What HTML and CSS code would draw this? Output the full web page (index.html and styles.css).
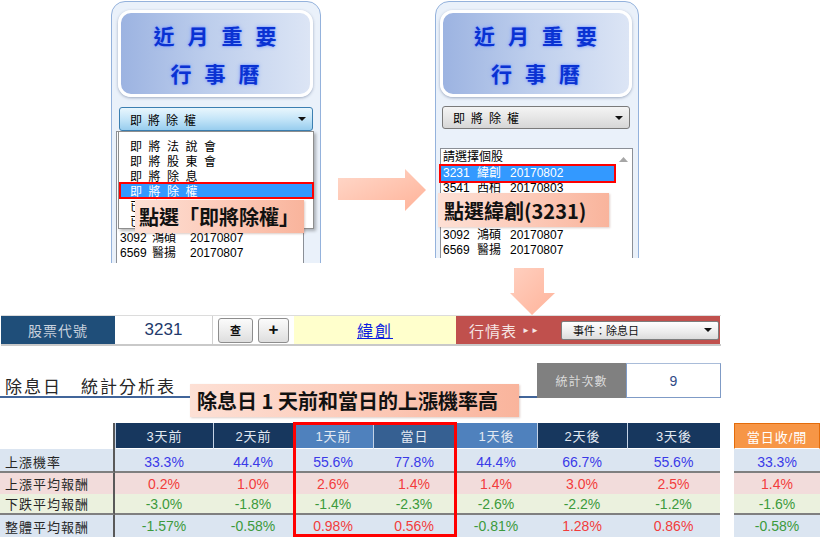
FILE: index.html
```html
<!DOCTYPE html>
<html lang="zh-Hant">
<head>
<meta charset="utf-8">
<title>除息日 統計分析表</title>
<link rel="stylesheet" href="styles.css">
</head>
<body>
<div class="page">
  <section class="top">
    <div class="clip clip-l">
      <div class="panel panel-l">
        <div class="cal-title">
          <div class="cal-line">近月重要</div>
          <div class="cal-line">行事曆</div>
        </div>
        <div class="combo combo-hot combo-l"><span class="combo-text">即將除權</span><span class="caret"></span></div>
        <div class="listbox lb-l">
          <div class="lb-row covered"><span class="c-code">請選擇個股</span></div>
          <div class="lb-row covered"><span class="c-code">2330</span><span class="c-name">台積</span><span>20170803</span></div>
          <div class="lb-row covered"><span class="c-code">1101</span><span class="c-name">台泥</span><span>20170804</span></div>
          <div class="lb-row covered"><span class="c-code">2412</span><span class="c-name">中華</span><span>20170804</span></div>
          <div class="lb-row covered"><span class="c-code">3008</span><span class="c-name">大立</span><span>20170805</span></div>
          <div class="lb-row covered"><span class="c-code">2317</span><span class="c-name">鴻海</span><span>20170806</span></div>
          <div class="lb-row"><span class="c-code">3092</span><span class="c-name">鴻碩</span><span>20170807</span></div>
          <div class="lb-row"><span class="c-code">6569</span><span class="c-name">醫揚</span><span>20170807</span></div>
        </div>
        <ul class="popup">
          <li>即將法說會</li>
          <li>即將股東會</li>
          <li>即將除息</li>
          <li class="sel">即將除權</li>
          <li>已除息個股</li>
          <li>已除權個股</li>
        </ul>
        <div class="callout co-l">點選「即將除權」</div>
      </div>
    </div>

    <div class="arrow-r">
      <svg width="90" height="44" viewBox="0 0 90 44">
        <defs>
          <linearGradient id="ga" x1="0" y1="0" x2="1" y2="1">
            <stop offset="0" stop-color="#ffd9cb"/>
            <stop offset="1" stop-color="#ffb298"/>
          </linearGradient>
        </defs>
        <polygon points="0,10 67,10 67,1 88,22 67,43 67,32 0,32" fill="url(#ga)"/>
      </svg>
    </div>

    <div class="clip clip-r">
      <div class="panel panel-r">
        <div class="cal-title cal-title-r">
          <div class="cal-line">近月重要</div>
          <div class="cal-line">行事曆</div>
        </div>
        <div class="combo combo-r"><span class="combo-text">即將除權</span><span class="caret"></span></div>
        <div class="listbox lb-r">
          <div class="lb-rows">
            <div class="lb-row">請選擇個股</div>
            <div class="lb-row sel"><span class="r-code">3231</span><span class="r-name">緯創</span><span>20170802</span></div>
            <div class="lb-row"><span class="r-code">3541</span><span class="r-name">西柏</span><span>20170803</span></div>
            <div class="lb-row covered"><span class="r-code">3596</span><span class="r-name">智易</span><span>20170804</span></div>
            <div class="lb-row covered"><span class="r-code">6176</span><span class="r-name">瑞儀</span><span>20170804</span></div>
            <div class="lb-row"><span class="r-code">3092</span><span class="r-name">鴻碩</span><span>20170807</span></div>
            <div class="lb-row"><span class="r-code">6569</span><span class="r-name">醫揚</span><span>20170807</span></div>
          </div>
          <div class="scroll">
            <svg width="9" height="6" viewBox="0 0 9 6"><polygon points="0,5 4.5,0 9,5" fill="#a6a6a6"/></svg>
          </div>
        </div>
        <div class="callout co-r">點選緯創(3231)</div>
      </div>
    </div>
  </section>

  <div class="gap-down">
    <svg class="arrow-d" width="46" height="47" viewBox="0 0 46 47">
      <defs>
        <linearGradient id="gd" x1="0" y1="0" x2="1" y2="1">
          <stop offset="0" stop-color="#ffd0c0"/>
          <stop offset="1" stop-color="#ffb39a"/>
        </linearGradient>
      </defs>
      <polygon points="4,0 34,0 34,25 45,25 22,47 0,25 4,25" fill="url(#gd)"/>
    </svg>
  </div>

  <div class="bar">
    <div class="b-label">股票代號</div>
    <div class="b-code">3231</div>
    <div class="b-btns">
      <span class="btn btn-q">查</span>
      <span class="btn btn-p">+</span>
    </div>
    <div class="b-name"><a href="#">緯創</a></div>
    <div class="b-red">
      <span class="b-quote">行情表</span>
      <span class="b-ff">►►</span>
      <div class="b-select"><span>事件：除息日</span><span class="caret"></span></div>
    </div>
  </div>

  <div class="stats-head">
    <div class="st-title">除息日　統計分析表</div>
    <div class="st-label">統計次數</div>
    <div class="st-value">9</div>
  </div>

  <div class="tbl-wrap">
    <div class="tbl">
      <div class="lab hd-empty"></div>
      <div class="hd navy">3天前</div>
      <div class="hd navy">2天前</div>
      <div class="hd mid">1天前</div>
      <div class="hd dark">當日</div>
      <div class="hd mid">1天後</div>
      <div class="hd navy">2天後</div>
      <div class="hd navy">3天後</div>
      <div class="gapc"></div>
      <div class="hd orange">當日收/開</div>

      <div class="lab r1 sep">上漲機率</div>
      <div class="v r1 sep blue">33.3%</div>
      <div class="v r1 sep blue">44.4%</div>
      <div class="v r1 sep blue">55.6%</div>
      <div class="v r1 sep blue">77.8%</div>
      <div class="v r1 sep blue">44.4%</div>
      <div class="v r1 sep blue">66.7%</div>
      <div class="v r1 sep blue">55.6%</div>
      <div class="gapc"></div>
      <div class="v r1 sep blue">33.3%</div>

      <div class="lab r2">上漲平均報酬</div>
      <div class="v r2 red">0.2%</div>
      <div class="v r2 red">1.0%</div>
      <div class="v r2 red">2.6%</div>
      <div class="v r2 red">1.4%</div>
      <div class="v r2 red">1.4%</div>
      <div class="v r2 red">3.0%</div>
      <div class="v r2 red">2.5%</div>
      <div class="gapc"></div>
      <div class="v r2 red">1.4%</div>

      <div class="lab r3 sep">下跌平均報酬</div>
      <div class="v r3 sep green">-3.0%</div>
      <div class="v r3 sep green">-1.8%</div>
      <div class="v r3 sep green">-1.4%</div>
      <div class="v r3 sep green">-2.3%</div>
      <div class="v r3 sep green">-2.6%</div>
      <div class="v r3 sep green">-2.2%</div>
      <div class="v r3 sep green">-1.2%</div>
      <div class="gapc"></div>
      <div class="v r3 sep green">-1.6%</div>

      <div class="lab r4">整體平均報酬</div>
      <div class="v r4 green">-1.57%</div>
      <div class="v r4 green">-0.58%</div>
      <div class="v r4 red">0.98%</div>
      <div class="v r4 red">0.56%</div>
      <div class="v r4 green">-0.81%</div>
      <div class="v r4 red">1.28%</div>
      <div class="v r4 red">0.86%</div>
      <div class="gapc"></div>
      <div class="v r4 green">-0.58%</div>
    </div>
    <div class="hl-box"></div>
  </div>

  <div class="callout co-big">除息日 1 天前和當日的上漲機率高</div>
</div>
</body>
</html>
```

FILE: styles.css
```css
* { box-sizing: border-box; }
html, body { margin: 0; padding: 0; background: #ffffff; }
body {
  font-family: "Liberation Sans", "Noto Sans CJK TC", sans-serif;
  color: #000;
}
.page {
  position: relative;
  width: 820px;
  height: 537px;
  overflow: hidden;
  background: #fff;
}

/* ---------- top section ---------- */
.top {
  display: flex;
  align-items: flex-start;
  height: 263px;
  overflow: hidden;
}
.clip { overflow: hidden; }
.clip-l { margin-left: 111px; width: 210px; height: 263px; }
.clip-r { width: 205px; height: 258px; }

.panel {
  position: relative;
  margin-top: 1px;
  height: 300px;
  background: #eaf1fa;
  border: 1px solid #94b2dc;
  border-radius: 14px 14px 0 0;
}
.panel-l { width: 210px; padding: 8px 6px 0 6px; }
.panel-r { width: 204px; padding: 8px 4px 0 4px; }

.cal-title {
  width: 195px;
  height: 87px;
  border: 3px solid #ffffff;
  border-radius: 13px;
  background: linear-gradient(90deg, #9cb3e1 0%, #bccdec 45%, #dce5f5 100%);
  box-shadow: 0 1px 3px rgba(60, 80, 120, 0.45);
  display: flex;
  flex-direction: column;
  align-items: center;
  justify-content: center;
  gap: 14px;
  padding-left: 12px;
}
.cal-title-r { width: 192px; }
.cal-line {
  font-family: "Noto Sans CJK TC", sans-serif;
  font-weight: 700;
  font-size: 21px;
  line-height: 24px;
  letter-spacing: 13px;
  color: #0a32d2;
  text-shadow: 0 0 2px #6f93ff, 0 0 4px #8eaaff;
}

.combo {
  position: relative;
  display: flex;
  align-items: center;
  height: 24px;
  border-radius: 3px;
  font-family: "Noto Sans CJK TC", sans-serif;
  font-size: 12px;
}
.combo-text { letter-spacing: 6px; }
.combo-l {
  margin: 10px 0 0 1px;
  width: 194px;
  padding-left: 10px;
  border: 1px solid #3c7fb1;
  background: linear-gradient(180deg, #e9f6fd 0%, #c4e5f8 50%, #98cdee 100%);
}
.combo-r {
  margin: 9px 0 0 2px;
  width: 188px;
  height: 23px;
  padding-left: 10px;
  border: 1px solid #7a7a7a;
  background: linear-gradient(180deg, #f4f4f4 0%, #e6e6e6 50%, #d6d6d6 100%);
}
.caret {
  position: absolute;
  right: 6px;
  top: 50%;
  margin-top: -2px;
  width: 0;
  height: 0;
  border-left: 4px solid transparent;
  border-right: 4px solid transparent;
  border-top: 4px solid #111;
}

.listbox {
  background: #fff;
  border: 1px solid #8b8f96;
  font-size: 12px;
  line-height: 15px;
}
.lb-row { white-space: nowrap; display: flex; }
.lb-row.covered { visibility: hidden; }
.lb-l {
  margin-left: -2px;
  width: 188px;
  height: 140px;
  padding: 9px 0 0 3px;
  line-height: 15px;
}
.c-code { width: 32px; }
.c-name { width: 38px; }

.popup {
  position: absolute;
  left: 6px;
  top: 129px;
  width: 196px;
  height: 98px;
  margin: 0;
  padding: 6px 0 0 1px;
  list-style: none;
  background: #fff;
  border: 1px solid #8e8e8e;
  box-shadow: 2px 2px 3px rgba(0, 0, 0, 0.28);
  font-family: "Noto Sans CJK TC", sans-serif;
  font-size: 12px;
  line-height: 15px;
}
.popup li {
  padding-left: 10px;
  letter-spacing: 6.5px;
  white-space: nowrap;
}
.popup li.sel {
  background: #3399ff;
  color: #fff;
  outline: 2px solid #ff0000;
  outline-offset: -1px;
}

.lb-r {
  display: flex;
  margin-top: 19px;
  width: 193px;
  height: 140px;
  line-height: 15.5px;
}
.lb-rows { flex: 1; padding-top: 1px; }
.lb-r .lb-row { padding-left: 2px; }
.lb-r .lb-row.sel {
  background: #3399ff;
  color: #fff;
  outline: 2px solid #ff0000;
  outline-offset: 0;
}
.r-code { width: 34px; }
.r-name { width: 33px; }
.scroll {
  width: 18px;
  display: flex;
  justify-content: center;
  padding-top: 8px;
}

.callout {
  position: absolute;
  display: flex;
  align-items: center;
  font-family: "Noto Sans CJK TC", sans-serif;
  font-weight: 700;
  font-size: 20px;
  color: #111;
  background: linear-gradient(90deg, #fde0d5 0%, #fcc9b7 55%, #f9b49c 100%);
  box-shadow: 1px 1px 2px rgba(120, 60, 40, 0.25);
  white-space: nowrap;
}
.co-l { left: 23px; top: 198px; width: 169px; height: 33px; padding-left: 4px; }
.co-r { left: 2px; top: 191px; width: 171px; height: 34px; padding-left: 6px; }
.co-big { left: 190px; top: 384px; width: 329px; height: 33px; padding-left: 7px; letter-spacing: 0; }

.arrow-r { width: 114px; padding: 168px 0 0 17px; }
.arrow-r svg { display: block; }

/* ---------- down arrow ---------- */
.gap-down { height: 52px; padding: 5px 0 0 510px; }
.arrow-d { display: block; }

/* ---------- bar ---------- */
.bar {
  display: flex;
  width: 720px;
  height: 31px;
  margin-left: 1px;
  border-top: 1px solid #dcdcdc;
  border-bottom: 2px solid #c9c9c9;
  white-space: nowrap;
}
.bar > div { flex-shrink: 0; }
.b-label {
  width: 114px;
  background: #1f4e79;
  color: #c8d1dd;
  font-size: 14px;
  letter-spacing: 1px;
  display: flex;
  align-items: center;
  justify-content: center;
}
.b-code {
  width: 98px;
  background: #fff;
  color: #233a6b;
  font-size: 17px;
  display: flex;
  align-items: center;
  justify-content: center;
  border-right: 1px solid #d0d0d0;
}
.b-btns {
  width: 81px;
  display: flex;
  align-items: center;
  gap: 5px;
  padding-left: 5px;
}
.btn {
  display: flex;
  align-items: center;
  justify-content: center;
  height: 25px;
  border: 1px solid #8d8d8d;
  border-radius: 3px;
  background: linear-gradient(180deg, #fbfbfb 0%, #ececec 55%, #dedede 100%);
  color: #111;
  font-weight: 700;
}
.btn-q { width: 35px; font-size: 11px; }
.btn-p { width: 31px; font-size: 17px; }
.b-name {
  width: 162px;
  background: #ffffcc;
  display: flex;
  align-items: center;
  justify-content: center;
  font-size: 16px;
}
.b-name a { color: #0b1ee0; text-decoration: underline; letter-spacing: 2px; }
.b-red {
  width: 264px;
  background: #c0504d;
  display: flex;
  align-items: center;
  padding-left: 13px;
}
.b-quote { color: #f6e4e3; font-size: 15px; letter-spacing: 1px; flex-shrink: 0; }
.b-ff { color: #f6e4e3; font-size: 8px; letter-spacing: 1px; margin-left: 5px; flex-shrink: 0; }
.b-select {
  position: relative;
  margin-left: auto;
  margin-right: 1px;
  width: 158px;
  height: 19px;
  flex-shrink: 0;
  display: flex;
  align-items: center;
  padding-left: 11px;
  border: 1px solid #7d7d7d;
  border-radius: 2px;
  background: linear-gradient(180deg, #ffffff 0%, #ececec 60%, #dcdcdc 100%);
  font-size: 11px;
  color: #111;
}

/* ---------- stats head ---------- */
.stats-head {
  display: flex;
  width: 721px;
  height: 35px;
  margin-top: 17px;
}
.st-title {
  flex: 1;
  border-bottom: 2px solid #41659a;
  font-size: 17px;
  letter-spacing: 2px;
  color: #262626;
  padding: 10px 0 0 5px;
}
.st-label {
  width: 89px;
  background: #808080;
  color: #dadada;
  font-size: 12px;
  letter-spacing: 1px;
  display: flex;
  align-items: center;
  justify-content: center;
}
.st-value {
  width: 95px;
  border: 1px solid #7f9bc6;
  border-top-color: #a9bcd9;
  color: #2f4a86;
  font-size: 14px;
  display: flex;
  align-items: center;
  justify-content: center;
}

/* ---------- table ---------- */
.tbl-wrap { position: relative; margin-top: 25px; }
.tbl {
  display: grid;
  grid-template-columns: 115px 98px 80px 80px 82px 82px 90px 93px 14px 86px;
  grid-template-rows: 26px 24px 21px 21px 22px;
  font-size: 14px;
}
.tbl > div { display: flex; align-items: center; }
.lab {
  padding-left: 5px;
  font-size: 13px;
  letter-spacing: 1px;
  color: #262626;
  border-right: 2px solid #595959;
}
.hd-empty { background: #fff; }
.hd {
  justify-content: center;
  font-size: 13px;
  letter-spacing: 1px;
  color: #e3e9f2;
  border-left: 1px solid #c5d3e6;
  border-bottom: 1px solid #ffffff;
}
.navy { background: #17375e; }
.mid { background: #4f81bd; }
.dark { background: #366092; }
.orange {
  background: #f79646;
  color: #fff;
  border: 1px solid #e46c0a;
  border-bottom: 1px solid #fff;
}
.v { justify-content: center; }
.r1 { background: #dbe5f1; padding-top: 3px; }
.r2 { background: #f2dcdb; }
.r3 { background: #ebf1de; }
.r4 { background: #dbe5f1; }
.sep { border-bottom: 2px solid #7f7f7f; }
.gapc { background: #fff; }
.blue { color: #3a3ae8; }
.red { color: #f23c3c; }
.green { color: #3c9a3c; }

.hl-box {
  position: absolute;
  left: 293px;
  top: -1px;
  width: 164px;
  height: 115px;
  border: 3px solid #ff0000;
  pointer-events: none;
}
```
